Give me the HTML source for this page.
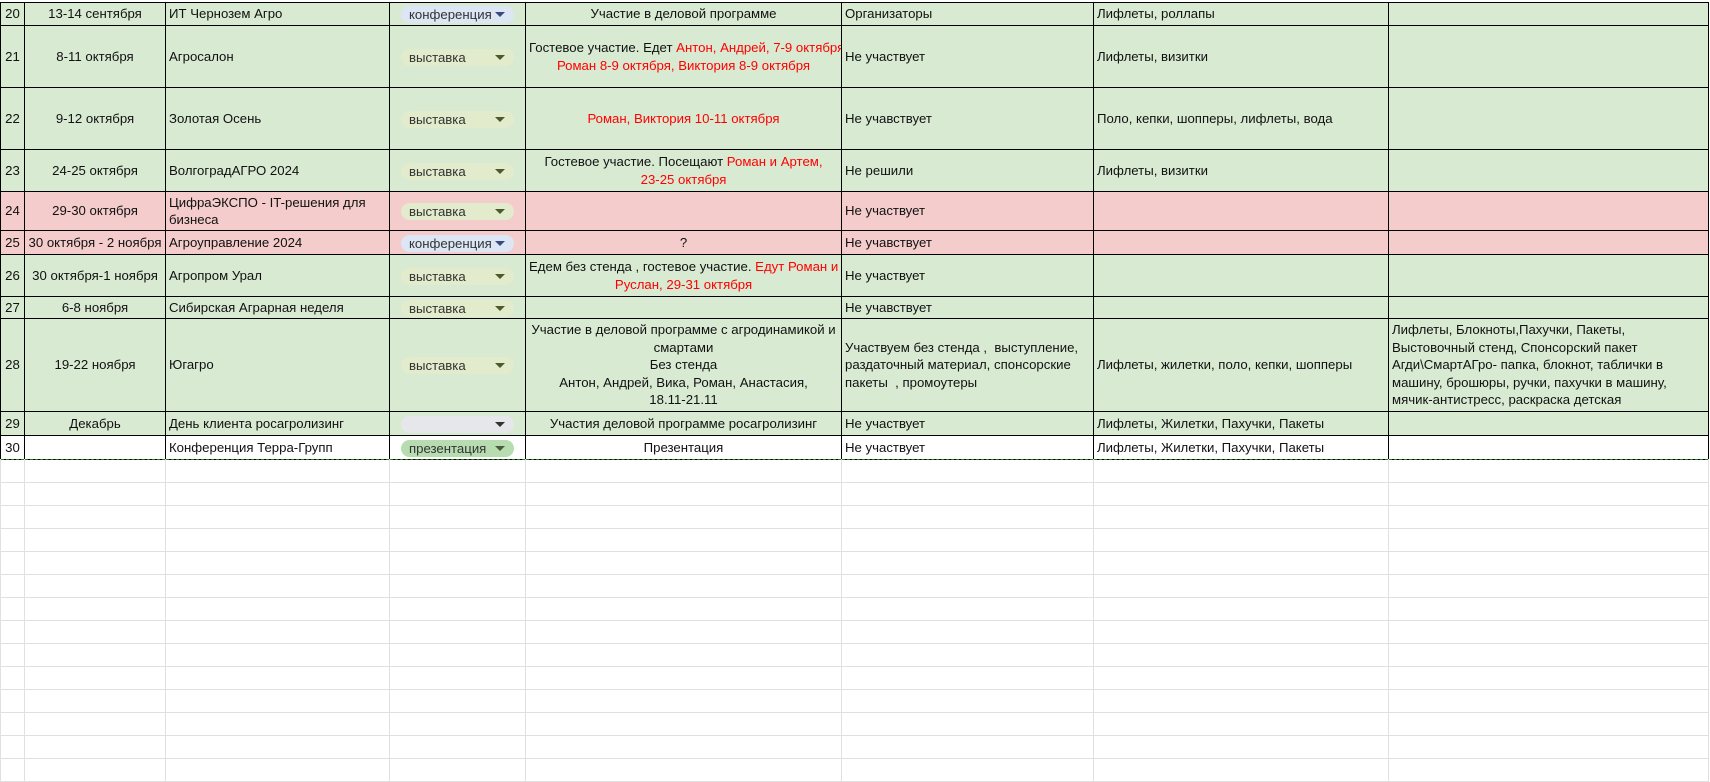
<!DOCTYPE html>
<html><head><meta charset="utf-8"><style>
body{margin:0;width:1710px;height:759px;overflow:hidden;background:#fff;font-family:"Liberation Sans","DejaVu Sans",sans-serif;font-size:13.2px;color:#111;position:relative}
table{border-collapse:collapse;table-layout:fixed;position:absolute;left:0;width:1708px}
td{padding:0 3px;overflow:hidden;white-space:nowrap;line-height:17.5px}
#d{top:2px}
#d td{border:1px solid #000;background:#d9ead3}
#d tr.p td{background:#f4cccc}
#d tr.w td{background:#fff}
#d td.n{text-align:center;padding:0}
.c{text-align:center}
.wr{white-space:normal}
.r{color:#f00}
.pill{display:inline-block;box-sizing:border-box;width:113px;height:17px;border-radius:9px;margin-left:8px;padding-left:8px;line-height:17px;position:relative;color:#333;font-size:13.2px;vertical-align:middle}
.pill:after{content:"";position:absolute;right:9px;top:6px;border-left:5px solid transparent;border-right:5px solid transparent;border-top:5px solid #333}
.k{background:#dce6f4}.k:after{border-top-color:#3a4a7a}
.v{background:#e2ebcc}.v:after{border-top-color:#4a5a2a}
.e{background:#e6e7ea}
.pr{background:#b7dcb0}.pr:after{border-top-color:#4a5a3a}
#g{top:459px}
#g td{border:1px solid #e0e0e0;height:22px;padding:0}
#g tr:first-child td{border-top:1px dashed #2a7a2a}
</style></head><body>
<table id="d">
<colgroup><col style="width:24px"><col style="width:141px"><col style="width:224px"><col style="width:136px"><col style="width:316px"><col style="width:252px"><col style="width:295px"><col style="width:320px"></colgroup>
<tr style="height:23px"><td class="n">20</td><td class="c">13-14 сентября</td><td>ИТ Чернозем Агро</td><td><span class="pill k">конференция</span></td><td class="c">Участие в деловой программе</td><td>Организаторы</td><td>Лифлеты, роллапы</td><td></td></tr>
<tr style="height:62px"><td class="n">21</td><td class="c">8-11 октября</td><td>Агросалон</td><td><span class="pill v">выставка</span></td><td class="c">Гостевое участие. Едет <span class="r">Антон, Андрей, 7-9 октября<br>Роман 8-9 октября, Виктория 8-9 октября</span></td><td>Не участвует</td><td>Лифлеты, визитки</td><td></td></tr>
<tr style="height:62px"><td class="n">22</td><td class="c">9-12 октября</td><td>Золотая Осень</td><td><span class="pill v">выставка</span></td><td class="c r">Роман, Виктория 10-11 октября</td><td>Не учавствует</td><td>Поло, кепки, шопперы, лифлеты, вода</td><td></td></tr>
<tr style="height:42px"><td class="n">23</td><td class="c">24-25 октября</td><td>ВолгоградАГРО 2024</td><td><span class="pill v">выставка</span></td><td class="c">Гостевое участие. Посещают <span class="r">Роман и Артем,<br>23-25 октября</span></td><td>Не решили</td><td>Лифлеты, визитки</td><td></td></tr>
<tr class="p" style="height:39px"><td class="n">24</td><td class="c">29-30 октября</td><td>ЦифраЭКСПО - IT-решения для<br>бизнеса</td><td><span class="pill v">выставка</span></td><td></td><td>Не участвует</td><td></td><td></td></tr>
<tr class="p" style="height:24px"><td class="n">25</td><td class="c">30 октября - 2 ноября</td><td>Агроуправление 2024</td><td><span class="pill k">конференция</span></td><td class="c">?</td><td>Не учавствует</td><td></td><td></td></tr>
<tr style="height:42px"><td class="n">26</td><td class="c">30 октября-1 ноября</td><td>Агропром Урал</td><td><span class="pill v">выставка</span></td><td class="c">Едем без стенда , гостевое участие. <span class="r">Едут Роман и<br>Руслан, 29-31 октября</span></td><td>Не участвует</td><td></td><td></td></tr>
<tr style="height:22px"><td class="n">27</td><td class="c">6-8 ноября</td><td>Сибирская Аграрная неделя</td><td><span class="pill v">выставка</span></td><td></td><td>Не учавствует</td><td></td><td></td></tr>
<tr style="height:93px"><td class="n">28</td><td class="c">19-22 ноября</td><td>Югагро</td><td><span class="pill v">выставка</span></td><td class="c">Участие в деловой программе с агродинамикой и<br>смартами<br>Без стенда<br>Антон, Андрей, Вика, Роман, Анастасия,<br>18.11-21.11</td><td>Участвуем без стенда ,&nbsp; выступление,<br>раздаточный материал, спонсорские<br>пакеты&nbsp; , промоутеры</td><td>Лифлеты, жилетки, поло, кепки, шопперы</td><td>Лифлеты, Блокноты,Пахучки, Пакеты,<br>Выстовочный стенд, Спонсорский пакет<br>Агди\СмартАГро- папка, блокнот, таблички в<br>машину, брошюры, ручки, пахучки в машину,<br>мячик-антистресс, раскраска детская</td></tr>
<tr style="height:24px"><td class="n">29</td><td class="c">Декабрь</td><td>День клиента росагролизинг</td><td><span class="pill e"></span></td><td class="c">Участия деловой программе росагролизинг</td><td>Не участвует</td><td>Лифлеты, Жилетки, Пахучки, Пакеты</td><td></td></tr>
<tr class="w" style="height:24px"><td class="n">30</td><td></td><td>Конференция Терра-Групп</td><td><span class="pill pr">презентация</span></td><td class="c">Презентация</td><td>Не участвует</td><td>Лифлеты, Жилетки, Пахучки, Пакеты</td><td></td></tr>
</table>
<table id="g">
<colgroup><col style="width:24px"><col style="width:141px"><col style="width:224px"><col style="width:136px"><col style="width:316px"><col style="width:252px"><col style="width:295px"><col style="width:320px"></colgroup>
<tr><td></td><td></td><td></td><td></td><td></td><td></td><td></td><td></td></tr>
<tr><td></td><td></td><td></td><td></td><td></td><td></td><td></td><td></td></tr>
<tr><td></td><td></td><td></td><td></td><td></td><td></td><td></td><td></td></tr>
<tr><td></td><td></td><td></td><td></td><td></td><td></td><td></td><td></td></tr>
<tr><td></td><td></td><td></td><td></td><td></td><td></td><td></td><td></td></tr>
<tr><td></td><td></td><td></td><td></td><td></td><td></td><td></td><td></td></tr>
<tr><td></td><td></td><td></td><td></td><td></td><td></td><td></td><td></td></tr>
<tr><td></td><td></td><td></td><td></td><td></td><td></td><td></td><td></td></tr>
<tr><td></td><td></td><td></td><td></td><td></td><td></td><td></td><td></td></tr>
<tr><td></td><td></td><td></td><td></td><td></td><td></td><td></td><td></td></tr>
<tr><td></td><td></td><td></td><td></td><td></td><td></td><td></td><td></td></tr>
<tr><td></td><td></td><td></td><td></td><td></td><td></td><td></td><td></td></tr>
<tr><td></td><td></td><td></td><td></td><td></td><td></td><td></td><td></td></tr>
<tr><td></td><td></td><td></td><td></td><td></td><td></td><td></td><td></td></tr>
</table>
</body></html>
